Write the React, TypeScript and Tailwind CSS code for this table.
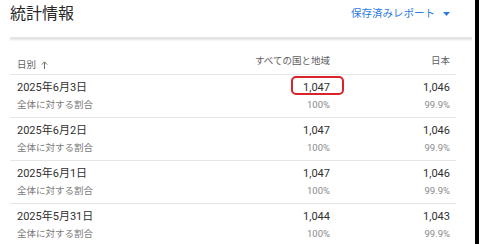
const ROWS = [
  { date: '2025年6月3日', all: '1,047', jp: '1,046', highlight: true },
  { date: '2025年6月2日', all: '1,047', jp: '1,046' },
  { date: '2025年6月1日', all: '1,047', jp: '1,046' },
  { date: '2025年5月31日', all: '1,044', jp: '1,043' },
]

const FONT = { fontFamily: 'Roboto, "Noto Sans CJK JP", sans-serif' }

export default function App() {
  return (
    <div className="flex w-[479px] h-[244px] bg-black overflow-hidden" style={FONT}>
      <div className="w-[475px] h-full bg-white pl-[10px] pr-[3px]">
        {/* Header */}
        <div className="flex items-center justify-between h-[28px] pr-[22px]">
          <h1 className="text-[16px] leading-[20px] text-[#282828]">統計情報</h1>
          <button className="flex items-center gap-[8px] text-[10.5px] text-[#2d7ae0]">
            保存済みレポート
            <svg width="7" height="4" viewBox="0 0 7 4">
              <path d="M0 0h7L3.5 4z" fill="#2d7ae0" />
            </svg>
          </button>
        </div>
        <div className="mt-[9px] h-[2px] bg-[#e4e4e4] shadow-[0_1px_2px_rgba(0,0,0,0.12)]" />

        {/* Table */}
        <div className="mr-[16px]">
          <div className="grid grid-cols-[1fr_120px_120px] h-[36px] border-b border-[#e6e6e6] pl-[7px] pr-[6px] pt-[16px] text-[9.5px] leading-[12px] text-[#606060]">
            <div className="flex items-center gap-[5px]">
              日別
              <svg width="7" height="8" viewBox="0 0 7 8">
                <path d="M3.5 8V1M0.8 3.6L3.5 0.9 6.2 3.6" stroke="#606060" strokeWidth="0.9" fill="none" />
              </svg>
            </div>
            <div className="text-right">すべての国と地域</div>
            <div className="text-right">日本</div>
          </div>

          {ROWS.map(r => (
            <div
              key={r.date}
              className="grid grid-cols-[1fr_120px_120px] h-[43px] border-b border-[#e6e6e6] pl-[7px] pr-[6px] pt-[6px]"
            >
              <div>
                <div className="text-[11px] leading-[13px] text-[#303030]">{r.date}</div>
                <div className="mt-[5px] text-[9.5px] leading-[12px] text-[#7a7a7a]">全体に対する割合</div>
              </div>
              <div className="text-right">
                <div className="text-[11px] leading-[13px] text-[#303030]">
                  <span className="relative inline-block">
                    {r.all}
                    {r.highlight && (
                      <span className="absolute -left-[12px] -right-[14px] -top-[5px] -bottom-[1px] rounded-[5px] border-2 border-[#d8232a]" />
                    )}
                  </span>
                </div>
                <div className="mt-[5px] text-[9.5px] leading-[12px] text-[#8a8a8a]">100%</div>
              </div>
              <div className="text-right">
                <div className="text-[11px] leading-[13px] text-[#303030]">{r.jp}</div>
                <div className="mt-[5px] text-[9.5px] leading-[12px] text-[#8a8a8a]">99.9%</div>
              </div>
            </div>
          ))}
        </div>
      </div>
    </div>
  )
}
